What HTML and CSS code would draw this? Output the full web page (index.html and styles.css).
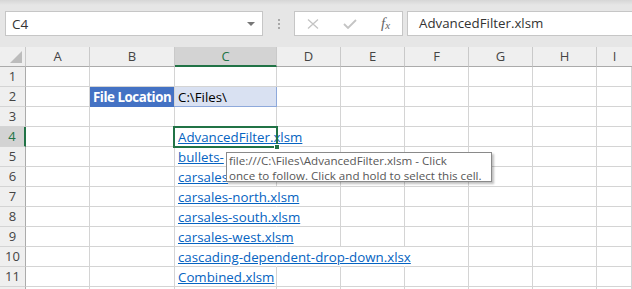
FILE: index.html
```html
<!DOCTYPE html>
<html lang="en">
<head>
  <meta charset="UTF-8">
  <title>AdvancedFilter.xlsm</title>
  <link rel="stylesheet" href="styles.css">
</head>
<body>
  <div class="app">
    <!-- name box + formula bar -->
    <div class="toolbar">
      <div class="namebox"><span>C4</span><span class="caret"></span></div>
      <div class="dots"><i></i><i></i><i></i></div>
      <div class="fxbox">
        <svg class="ico" width="12" height="10" viewBox="0 0 12 10"><path d="M1 0.5 L11 9.5 M11 0.5 L1 9.5" stroke="#c4c4c4" stroke-width="1.3" fill="none"/></svg>
        <svg class="ico" width="14" height="10" viewBox="0 0 14 10"><path d="M1 5 L5 9 L13 1" stroke="#c4c4c4" stroke-width="1.8" fill="none"/></svg>
        <span class="fx">f<sub>x</sub></span>
      </div>
      <div class="formula">AdvancedFilter.xlsm</div>
    </div>

    <!-- worksheet -->
    <div class="sheet">
      <div class="hd corner"><span class="tri"></span></div>
      <div class="hd">A</div><div class="hd">B</div><div class="hd sel">C</div><div class="hd">D</div>
      <div class="hd">E</div><div class="hd">F</div><div class="hd">G</div><div class="hd">H</div><div class="hd last">I</div>

      <div class="rh">1</div>
      <div class="c"></div><div class="c"></div><div class="c"></div><div class="c"></div><div class="c"></div><div class="c"></div><div class="c"></div><div class="c"></div><div class="c"></div>

      <div class="rh">2</div>
      <div class="c"></div><div class="c label">File Location</div><div class="c path">C:\Files\</div><div class="c"></div><div class="c"></div><div class="c"></div><div class="c"></div><div class="c"></div><div class="c"></div>

      <div class="rh">3</div>
      <div class="c"></div><div class="c"></div><div class="c"></div><div class="c"></div><div class="c"></div><div class="c"></div><div class="c"></div><div class="c"></div><div class="c"></div>

      <div class="rh sel">4</div>
      <div class="c"></div><div class="c"></div><div class="c spill"><a>AdvancedFilter.xlsm</a></div><div class="c"></div><div class="c"></div><div class="c"></div><div class="c"></div><div class="c"></div><div class="c"></div>

      <div class="rh">5</div>
      <div class="c"></div><div class="c"></div><div class="c spill"><a>bullets-</a></div><div class="c"></div><div class="c"></div><div class="c"></div><div class="c"></div><div class="c"></div><div class="c"></div>

      <div class="rh">6</div>
      <div class="c"></div><div class="c"></div><div class="c"><a>carsales</a></div><div class="c"></div><div class="c"></div><div class="c"></div><div class="c"></div><div class="c"></div><div class="c"></div>

      <div class="rh">7</div>
      <div class="c"></div><div class="c"></div><div class="c spill"><a>carsales-north.xlsm</a></div><div class="c"></div><div class="c"></div><div class="c"></div><div class="c"></div><div class="c"></div><div class="c"></div>

      <div class="rh">8</div>
      <div class="c"></div><div class="c"></div><div class="c spill"><a>carsales-south.xlsm</a></div><div class="c"></div><div class="c"></div><div class="c"></div><div class="c"></div><div class="c"></div><div class="c"></div>

      <div class="rh">9</div>
      <div class="c"></div><div class="c"></div><div class="c spill"><a>carsales-west.xlsm</a></div><div class="c"></div><div class="c"></div><div class="c"></div><div class="c"></div><div class="c"></div><div class="c"></div>

      <div class="rh">10</div>
      <div class="c"></div><div class="c"></div><div class="c spill"><a>cascading-dependent-drop-down.xlsx</a></div><div class="c spill"></div><div class="c spill"></div><div class="c"></div><div class="c"></div><div class="c"></div><div class="c"></div>

      <div class="rh">11</div>
      <div class="c"></div><div class="c"></div><div class="c"><a>Combined.xlsm</a></div><div class="c"></div><div class="c"></div><div class="c"></div><div class="c"></div><div class="c"></div><div class="c"></div>

      <div class="rh"></div>
      <div class="c"></div><div class="c"></div><div class="c"></div><div class="c"></div><div class="c"></div><div class="c"></div><div class="c"></div><div class="c"></div><div class="c"></div>

      <!-- active cell frame and hyperlink tooltip -->
      <div class="cursor"><span class="handle"></span></div>
      <div class="tip"><div>file:///C:\Files\AdvancedFilter.xlsm - Click</div><div>once to follow. Click and hold to select this cell.</div></div>
    </div>
  </div>
</body>
</html>
```

FILE: styles.css
```css
* { box-sizing: border-box; margin: 0; padding: 0; }
html, body { width: 632px; height: 289px; overflow: hidden; background: #fff; }
body { font-family: "Open Sans", "Noto Sans", sans-serif; color: #333; }

.app { width: 632px; height: 289px; overflow: hidden; }

/* formula bar */
.toolbar {
  height: 47px; display: flex; align-items: flex-start;
  padding: 11px 0 0 5px;
  background: linear-gradient(#d6d6d6, #e6e6e6 5px, #e6e6e6);
}
.toolbar > * { flex-shrink: 0; }
.namebox {
  width: 258px; height: 25px; background: #fff; border: 1px solid #c6c6c6;
  display: flex; align-items: center; justify-content: space-between;
  padding: 0 7px 0 6px; font-size: 13.5px; color: #333;
}
.caret { width: 0; height: 0; border-left: 4px solid transparent; border-right: 4px solid transparent; border-top: 4px solid #777; }
.dots { width: 31px; height: 25px; display: flex; flex-direction: column; align-items: center; justify-content: center; gap: 2px; }
.dots i { width: 2px; height: 2px; background: #a8a8a8; }
.fxbox {
  width: 109px; height: 25px; background: #fff; border: 1px solid #c6c6c6;
  display: flex; align-items: center; padding-left: 12px;
}
.fxbox .ico { margin-right: 24px; }
.fx { font-family: "Liberation Serif", serif; font-style: italic; font-size: 15px; color: #666; }
.fx sub { font-size: 11px; vertical-align: -1px; }
.formula {
  margin-left: 4px; width: 300px; height: 25px; background: #fff; border: 1px solid #c6c6c6;
  padding-left: 11px; line-height: 23px; font-size: 13.3px; color: #333;
}

/* grid */
.sheet {
  position: relative;
  display: grid;
  grid-template-columns: 26px 64px 85px 102px 64px 64px 64px 64px 64px 1fr;
  grid-auto-rows: 20px;
}
.hd {
  background: #efefef; border-right: 1px solid #c9c9c9; border-bottom: 1px solid #ababab;
  font-size: 13px; color: #444; text-align: center; line-height: 19px;
}
.hd.sel { background: #d3d3d3; color: #217346; border-bottom: 2px solid #217346; }
.hd.last { border-right: 0; }
.corner { position: relative; }
.tri {
  position: absolute; right: 3px; bottom: 3px; width: 0; height: 0;
  border-left: 12px solid transparent; border-bottom: 12px solid #bcbcbc;
}
.rh {
  background: #efefef; border-right: 1px solid #ababab; border-bottom: 1px solid #d4d4d4;
  font-size: 13px; color: #444; text-align: center; line-height: 19px;
}
.rh.sel { background: #d3d3d3; color: #217346; border-right: 2px solid #217346; }
.c {
  border-right: 1px solid #d4d4d4; border-bottom: 1px solid #d4d4d4;
  font-size: 13.3px; line-height: 20px; padding-left: 3px;
  white-space: nowrap; overflow: visible; position: relative;
}
.c.spill { border-right-color: transparent; }
.c a { color: #0563c1; text-decoration: underline; position: relative; z-index: 1; }
.label { background: #4472c4; color: #fff; font-weight: bold; letter-spacing: -0.45px; border-bottom-color: #4472c4; }
.path { background: #d9e1f2; color: #000; border: 1px solid #8ea9db; border-left: 0; border-top: 0; }

/* active cell */
.cursor {
  position: absolute; left: 173px; top: 79px; width: 105px; height: 22px;
  border: 2px solid #217346; z-index: 2;
}
.handle {
  position: absolute; right: -4px; bottom: -4px; width: 6px; height: 6px;
  background: #217346; border: 1px solid #fff;
}
.tip {
  position: absolute; left: 226px; top: 105px; width: 266px; height: 30px;
  background: #fff; border: 1px solid #8a8a8a; z-index: 3;
  box-shadow: 2px 2px 2px rgba(0,0,0,0.25);
  padding: 0 0 0 2px; font-size: 11.6px; line-height: 15px; color: #575757;
  white-space: nowrap; overflow: hidden;
}
```
